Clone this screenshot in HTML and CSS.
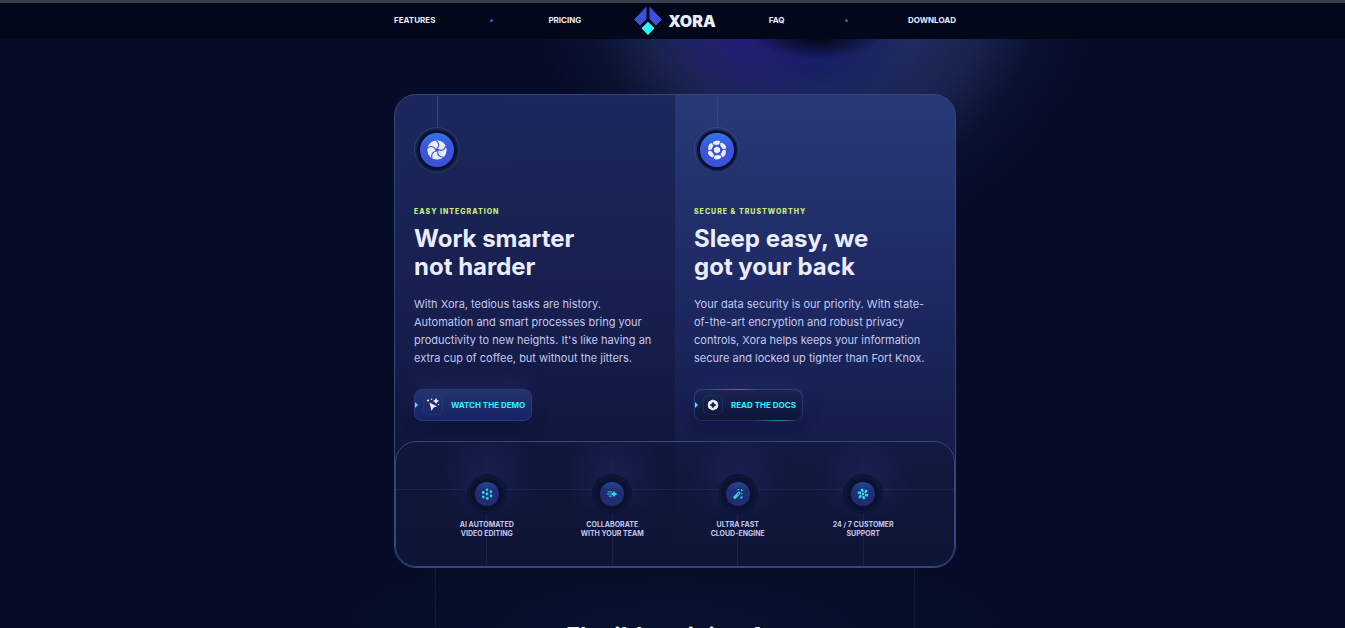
FILE: index.html
```
<!DOCTYPE html>
<html lang="en">
<head>
<meta charset="utf-8">
<meta name="viewport" content="width=device-width, initial-scale=1">
<title>Xora</title>
<link rel="stylesheet" href="styles.css">
</head>
<body>
<header class="site-header">
  <nav class="container nav" aria-label="Main">
    <div class="nav-group">
      <a href="#features">FEATURES</a>
      <span class="dot"></span>
      <a href="#pricing">PRICING</a>
    </div>
    <a class="logo" href="#">
      <svg width="28" height="28" viewBox="0 0 28 28" aria-hidden="true">
        <g fill="#3c52d9" stroke="#3c52d9" stroke-linejoin="round">
          <path d="M12 .5v11.500l-6 6L.5 12.500z"/>
          <path d="M16 .5v11.500l6 6 5.500-5.500z"/>
        </g>
        <path d="M14 15.700l5.500 5.500-5.500 5.800-5.500-5.800z" fill="#2ef2ff" stroke="#2ef2ff" stroke-width="1.500" stroke-linejoin="round"/>
      </svg>
      <span>XORA</span>
    </a>
    <div class="nav-group">
      <a href="#faq">FAQ</a>
      <span class="dot"></span>
      <a href="#download">DOWNLOAD</a>
    </div>
  </nav>
</header>

<main>
  <section class="features" id="features">
    <div class="container">
      <div class="card">
        <article class="feature">
          <div class="badge">
            <svg width="34" height="34" viewBox="0 0 20 20" aria-hidden="true">
              <circle cx="10" cy="10" r="9.800" fill="#eaedff"/>
              <g fill="none" stroke="#3c52d9" stroke-width="1.100">
                <path id="blade" d="M10 8.500C12.500 6.500 12.500 3 9 .3"/>
                <use href="#blade" transform="rotate(72 10 10)"/>
                <use href="#blade" transform="rotate(144 10 10)"/>
                <use href="#blade" transform="rotate(216 10 10)"/>
                <use href="#blade" transform="rotate(288 10 10)"/>
              </g>
              <circle cx="10" cy="10" r="1.800" fill="#3c52d9"/>
            </svg>
          </div>
          <p class="eyebrow">EASY INTEGRATION</p>
          <h2>Work smarter<br>not harder</h2>
          <p class="copy">With Xora, tedious tasks are history.<br>Automation and smart processes bring your<br>productivity to new heights. It's like having an<br>extra cup of coffee, but without the jitters.</p>
          <button class="btn btn-solid" type="button">
            <span class="btn-icon">
              <svg width="14" height="14" viewBox="0 0 14 14" fill="#eaedff" aria-hidden="true">
                <path d="M3.500 4.500l7.500 4-3.500 1-2 3.500z"/>
                <path d="M10 .5l.9 1.600 1.600.9-1.600.9-.9 1.600-.9-1.600L7.500 3l1.600-.9z" stroke="#eaedff" stroke-width=".600"/>
                <circle cx="5.500" cy="1.300" r=".800"/><circle cx="2" cy="2.500" r="1.100"/><circle cx="12.500" cy="6.500" r=".700"/>
              </svg>
            </span>
            <span>WATCH THE DEMO</span>
          </button>
        </article>

        <article class="feature">
          <div class="badge">
            <svg width="34" height="34" viewBox="0 0 20 20" fill="#eaedff" aria-hidden="true">
              <path id="seg" d="M5.800 2.600C7.200 1 9 .3 11.800.4l1.500 1.400-1.200 2.700-3.800.5-2.300-.9z"/>
              <use href="#seg" transform="rotate(60 10 10)"/>
              <use href="#seg" transform="rotate(120 10 10)"/>
              <use href="#seg" transform="rotate(180 10 10)"/>
              <use href="#seg" transform="rotate(240 10 10)"/>
              <use href="#seg" transform="rotate(300 10 10)"/>
              <path d="M10 6.600l3 1.700v3.400l-3 1.700-3-1.700V8.300z"/>
            </svg>
          </div>
          <p class="eyebrow">SECURE &amp; TRUSTWORTHY</p>
          <h2>Sleep easy, we<br>got your back</h2>
          <p class="copy">Your data security is our priority. With state-<br>of-the-art encryption and robust privacy<br>controls, Xora helps keeps your information<br>secure and locked up tighter than Fort Knox.</p>
          <button class="btn btn-outline" type="button">
            <span class="btn-icon">
              <svg width="14" height="14" viewBox="0 0 14 14" aria-hidden="true">
                <path d="M7 2l4 1.800.8 3.200-.8 3.200L7 12l-4-1.800L2.200 7 3 3.800z" fill="#eaedff" stroke="#eaedff" stroke-linejoin="round"/>
                <path d="M7 4.200l1 1.800 1.800 1L8 8 7 9.800 6 8 4.200 7 6 6z" fill="#0c1838" stroke="#0c1838" stroke-width=".800"/>
              </svg>
            </span>
            <span>READ THE DOCS</span>
          </button>
        </article>

        <ul class="details">
          <li>
            <span class="disc">
              <svg width="24" height="24" viewBox="0 0 12 12" fill="#2ed8f0" aria-hidden="true">
                <circle cx="6" cy="6" r="1.400"/><circle cx="6" cy="1.800" r="1.400"/><circle cx="10" cy="3.700" r="1.400"/><circle cx="10" cy="8" r="1.400"/><circle cx="6.300" cy="10.400" r="1.400"/><circle cx="2.200" cy="9" r="1.400"/><circle cx="2.200" cy="4.500" r="1.400"/>
              </svg>
            </span>
            AI AUTOMATED<br>VIDEO EDITING
          </li>
          <li>
            <span class="disc">
              <svg width="24" height="24" viewBox="0 0 12 12" fill="#2ed8f0" aria-hidden="true">
                <path d="M8 3l1.200 1.800L11.500 6 9.200 7.200 8 9 6.800 7.200 4.500 6l2.300-1.200z"/>
                <path d="M1.500 3.300H6v1.200H1.500zM.5 5.500H5v1H.5zM2.500 7.500H6v1.200H2.500z" opacity=".7"/>
              </svg>
            </span>
            COLLABORATE<br>WITH YOUR TEAM
          </li>
          <li>
            <span class="disc">
              <svg width="24" height="24" viewBox="0 0 12 12" fill="#2ed8f0" aria-hidden="true">
                <path d="M2.500 9.700L7 5" stroke="#2ed8f0" stroke-width="3" stroke-linecap="round"/>
                <path d="M5.300 7L7 5.100" stroke="#173a7c" stroke-width="1"/>
                <path d="M9 1h2v2H9zM5.500 1h1.500v1.300H5.500zM9.300 5.300h1.200v1.200H9.300zM8.500 8.500h2.200v2.200H8.500z"/>
              </svg>
            </span>
            ULTRA FAST<br>CLOUD-ENGINE
          </li>
          <li>
            <span class="disc">
              <svg width="24" height="24" viewBox="0 0 12 12" fill="#2ed8f0" aria-hidden="true">
                <circle cx="6" cy="6" r="1.300"/>
                <path id="fan" d="M5 4.200L3.400 1.200 5.700.2 6.300 2l1.300 1.200z"/>
                <use href="#fan" transform="rotate(60 6 6)"/>
                <use href="#fan" transform="rotate(120 6 6)"/>
                <use href="#fan" transform="rotate(180 6 6)"/>
                <use href="#fan" transform="rotate(240 6 6)"/>
                <use href="#fan" transform="rotate(300 6 6)"/>
              </svg>
            </span>
            24 / 7 CUSTOMER<br>SUPPORT
          </li>
        </ul>
      </div>
    </div>
  </section>

  <section class="pricing" id="pricing">
    <div class="container">
      <div class="pricing-frame">
        <h2>Flexible pricing for<br>teams of all sizes</h2>
      </div>
    </div>
  </section>
</main>
</body>
</html>
```
FILE: styles.css
```
* { box-sizing: border-box; }

html { scrollbar-width: none; }

body {
  margin: 0;
  background: #060c28;
  color: #eaedff;
  font-family: Inter, "Liberation Sans", sans-serif;
  overflow-x: hidden;
}

h2, p, ul { margin: 0; padding: 0; }

.container {
  max-width: 562px;
  margin: 0 auto;
}

.site-header,
.features,
.pricing { padding-left: 5px; }

/* Header */
.site-header {
  background: #020719;
  border-top: 3px solid #38414d;
}

.nav {
  display: grid;
  grid-template-columns: repeat(3, 1fr);
  height: 36px;
  align-items: center;
}

.nav-group {
  display: flex;
  align-items: center;
  justify-content: space-between;
  padding-bottom: 2px;
}

.nav a {
  color: #eaedff;
  text-decoration: none;
  font-size: 8px;
  line-height: 12px;
  font-weight: 700;
}

.dot {
  width: 3px;
  height: 3px;
  border-radius: 50%;
  background: #3c52d9;
}

.nav .logo {
  display: flex;
  align-items: center;
  justify-content: center;
  gap: 6px;
  font-size: 16px;
  font-weight: 900;
}

/* Features */
.features {
  padding-top: 55px;
  background:
    radial-gradient(ellipse 65px 24px at 818px -4px, #030612 10%, transparent),
    radial-gradient(ellipse 90px 65px at 745px 0, rgba(36, 24, 125, .7), transparent),
    radial-gradient(ellipse 100px 75px at 815px 5px, rgba(14, 22, 105, .75), transparent),
    radial-gradient(circle 285px at 815px -80px, #202c5e 45%, rgba(30, 42, 90, .75) 64%, rgba(18, 26, 62, .4) 82%, transparent);
}

.card {
  display: grid;
  grid-template-columns: 1fr 1fr;
  border: 1px solid #33477d;
  border-radius: 22px;
  overflow: hidden;
  background:
    linear-gradient(#293978, #1c2860 45%, #141c48 75%, #0a1130) right / 50% 100% no-repeat,
    linear-gradient(#1c285c, #161e4c 50%, #10163c 75%, #0a1130) left / 50% 100% no-repeat;
}

.feature { padding: 0 19px 20px; }

.badge {
  position: relative;
  display: grid;
  place-items: center;
  width: 46px;
  height: 46px;
  margin-top: 32px;
  border: 1px solid rgba(80, 98, 160, .4);
  border-radius: 50%;
}

.badge svg {
  padding: 7px;
  border-radius: 50%;
  background: linear-gradient(#2f76e8, #3c52d9 45%);
  box-shadow: 0 0 0 3px #081230, 0 1px 4px 3px rgba(8, 18, 48, .5);
}

.badge::before {
  content: "";
  position: absolute;
  bottom: 100%;
  left: 22px;
  width: 1px;
  height: 32px;
  background: #33477d;
}

.eyebrow {
  margin-top: 34px;
  color: #c8ea80;
  font-size: 7px;
  line-height: 10px;
  font-weight: 800;
  letter-spacing: 1px;
}

h2 {
  font-size: 24px;
  line-height: 28px;
  font-weight: 700;
}

.feature h2 { margin-top: 8px; }

.copy {
  margin-top: 14px;
  color: #c3c8f0;
  font-size: 11px;
  line-height: 18px;
  white-space: nowrap;
}

/* Buttons */
.btn {
  position: relative;
  display: flex;
  align-items: center;
  gap: 8px;
  height: 32px;
  margin-top: 22px;
  padding: 0 6px 0 8px;
  border: 1px solid #2b3a78;
  border-radius: 8px;
  color: #2ef2ff;
  font: 700 8px/12px Inter, "Liberation Sans", sans-serif;
  box-shadow: 0 8px 14px rgba(5, 10, 36, .25), 0 -8px 20px rgba(50, 55, 130, .25);
}

.btn::before {
  content: "";
  position: absolute;
  left: 0;
  top: 12px;
  border: 3px solid transparent;
  border-left-color: #2ef2ff;
  border-right: 0;
}

.btn-solid { background: linear-gradient(#24336f, #182367); }

.btn-outline {
  border-color: transparent;
  background:
    linear-gradient(#1a2353, #0e1538) padding-box,
    linear-gradient(90deg, transparent 10%, #2588a8 40%, transparent 62%) top / 100% 1px no-repeat border-box,
    linear-gradient(90deg, transparent 55%, #2588a8 80%, transparent 95%) bottom / 100% 1px no-repeat border-box,
    linear-gradient(#2f3f80, #1d2c74) border-box;
}

.btn-icon {
  display: grid;
  place-items: center;
  width: 20px;
  height: 20px;
  border: 1px solid rgba(30, 90, 140, .3);
  border-radius: 6px;
}

/* Detail list */
.details {
  grid-column: 1 / -1;
  display: grid;
  grid-template-columns: repeat(4, 1fr);
  padding: 16px 28px 0;
  border: 1px solid #33477d;
  border-radius: 21px;
  list-style: none;
  background:
    linear-gradient(rgba(50, 68, 125, .3), rgba(50, 68, 125, .3)) 0 47px / 100% 1px no-repeat,
    radial-gradient(circle 50px at 91px 34px, rgba(36, 42, 104, .45), transparent),
    radial-gradient(circle 50px at 217px 34px, rgba(36, 42, 104, .45), transparent),
    radial-gradient(circle 50px at 342px 34px, rgba(36, 42, 104, .45), transparent),
    radial-gradient(circle 50px at 468px 34px, rgba(36, 42, 104, .45), transparent),
    linear-gradient(rgba(16, 24, 60, .6), rgba(14, 21, 54, .8));
}

.details li {
  display: flow-root;
  padding: 16px 0 28px;
  color: #c3c8f0;
  font-size: 7px;
  line-height: 9px;
  font-weight: 700;
  text-align: center;
  background: linear-gradient(#18224a, #18224a) center / 1px 100% no-repeat;
}

.disc {
  display: grid;
  place-items: center;
  width: 40px;
  height: 40px;
  margin: 0 auto 6px;
  border-radius: 50%;
  background: #0e1537;
}

.disc svg {
  padding: 6px;
  border-radius: 50%;
  background: linear-gradient(#1c4c94, #1e2f74 35%, #202c70);
  box-shadow: 0 0 0 4px #0b1231;
}

/* Pricing */
.pricing {
  background: radial-gradient(ellipse 330px 90px at 674px 60px, #08122f, transparent);
}

.pricing-frame {
  margin: 0 41px;
  padding: 55px 0 60px;
  border: solid #0d1c3c;
  border-width: 0 1px;
  text-align: center;
}
```
